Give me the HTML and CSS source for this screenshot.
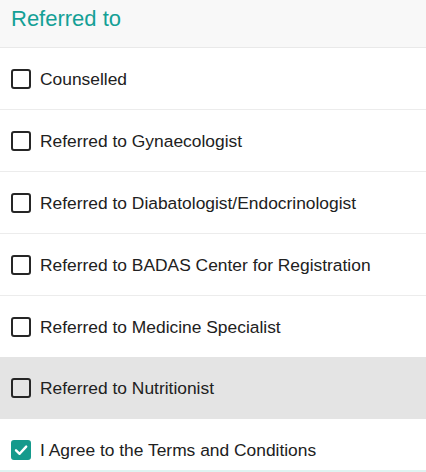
FILE: index.html
```html
<!DOCTYPE html>
<html>
<head>
<meta charset="utf-8">
<link rel="stylesheet" href="styles.css">
</head>
<body>
<div class="panel">
  <div class="panel-header">Referred to</div>
  <ul class="list">
    <li class="item"><span class="box"></span><span class="label">Counselled</span></li>
    <li class="item"><span class="box"></span><span class="label">Referred to Gynaecologist</span></li>
    <li class="item"><span class="box"></span><span class="label">Referred to Diabatologist/Endocrinologist</span></li>
    <li class="item"><span class="box"></span><span class="label">Referred to BADAS Center for Registration</span></li>
    <li class="item"><span class="box"></span><span class="label">Referred to Medicine Specialist</span></li>
    <li class="item item-hover"><span class="box"></span><span class="label">Referred to Nutritionist</span></li>
    <li class="item item-agree"><span class="box box-checked"><svg viewBox="0 0 20 20" width="20" height="20"><path d="M5 10.3 L8.6 13.8 L15.2 6.6" fill="none" stroke="#fff" stroke-width="2.4" stroke-linecap="round" stroke-linejoin="round"/></svg></span><span class="label">I Agree to the Terms and Conditions</span></li>
  </ul>
</div>
</body>
</html>
```
FILE: styles.css
```css
html, body {
  margin: 0;
  padding: 0;
  background: #ffffff;
}
body {
  font-family: "Liberation Sans", Arial, sans-serif;
  color: #212121;
}
.panel {
  width: 426px;
}
.panel-header {
  height: 48px;
  box-sizing: border-box;
  padding: 4px 0 0 11px;
  background: #f8f8f8;
  border-bottom: 1px solid #e9e9e9;
  color: #14a096;
  font-size: 22px;
  line-height: 30px;
}
.list {
  list-style: none;
  margin: 0;
  padding: 0;
}
.item {
  display: flex;
  align-items: center;
  gap: 9px;
  height: 61px;
  padding-left: 11px;
  border-bottom: 1px solid #ececec;
  font-size: 17.4px;
}
.item-hover {
  background: #e4e4e4;
  border-bottom-color: #ffffff;
  margin-top: -1px;
  height: 62px;
}
.item-agree {
  height: 40px;
  padding-top: 10px;
  border-bottom: 2px solid #dff3f1;
}
.box {
  width: 20px;
  height: 20px;
  box-sizing: border-box;
  border: 2px solid #262626;
  border-radius: 3px;
  flex-shrink: 0;
  display: flex;
  align-items: center;
  justify-content: center;
}
.box-checked {
  background: #159a8c;
  border-color: #159a8c;
}
.box-checked svg {
  display: block;
  flex-shrink: 0;
}
.label {
  line-height: 20px;
}
```
